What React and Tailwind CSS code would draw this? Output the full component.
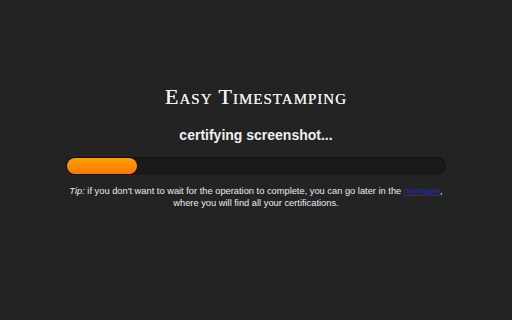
export default function App() {
  return (
    <div className="flex h-[320px] w-[512px] flex-col items-center bg-[#232323] pt-[85px] text-white">
      {/* title */}
      <h1
        className="text-[22px] leading-[24px] tracking-[1px] text-[#f2f2f2] [text-shadow:0_0_0.4px_#f2f2f2]"
        style={{ fontFamily: '"Liberation Serif", serif', fontVariant: 'small-caps' }}
      >
        Easy Timestamping
      </h1>

      <p className="mt-[18px] text-[14px] font-bold leading-[16px] text-[#f0f0f0] font-['Liberation_Sans',sans-serif]">
        certifying screenshot...
      </p>

      {/* progress */}
      <div className="mt-[14px] h-[18px] w-[380px] rounded-full bg-[#1a1a1a] p-px shadow-[inset_0_1px_2px_rgba(0,0,0,0.5)]">
        <div className="h-[16px] w-[70px] rounded-full bg-gradient-to-b from-[#ffa000] to-[#ff7800] shadow-[0_0_1px_rgba(0,0,0,0.8)]" />
      </div>

      <p className="mt-[10px] text-center text-[9.3px] leading-[12px] text-[#ececec] font-['Liberation_Sans',sans-serif]">
        <i>Tip:</i> if you don't want to wait for the operation to complete, you can go later in the{' '}
        <a href="#" className="text-[#2222ee] underline">manager</a>,
        <br />
        where you will find all your certifications.
      </p>
    </div>
  )
}
